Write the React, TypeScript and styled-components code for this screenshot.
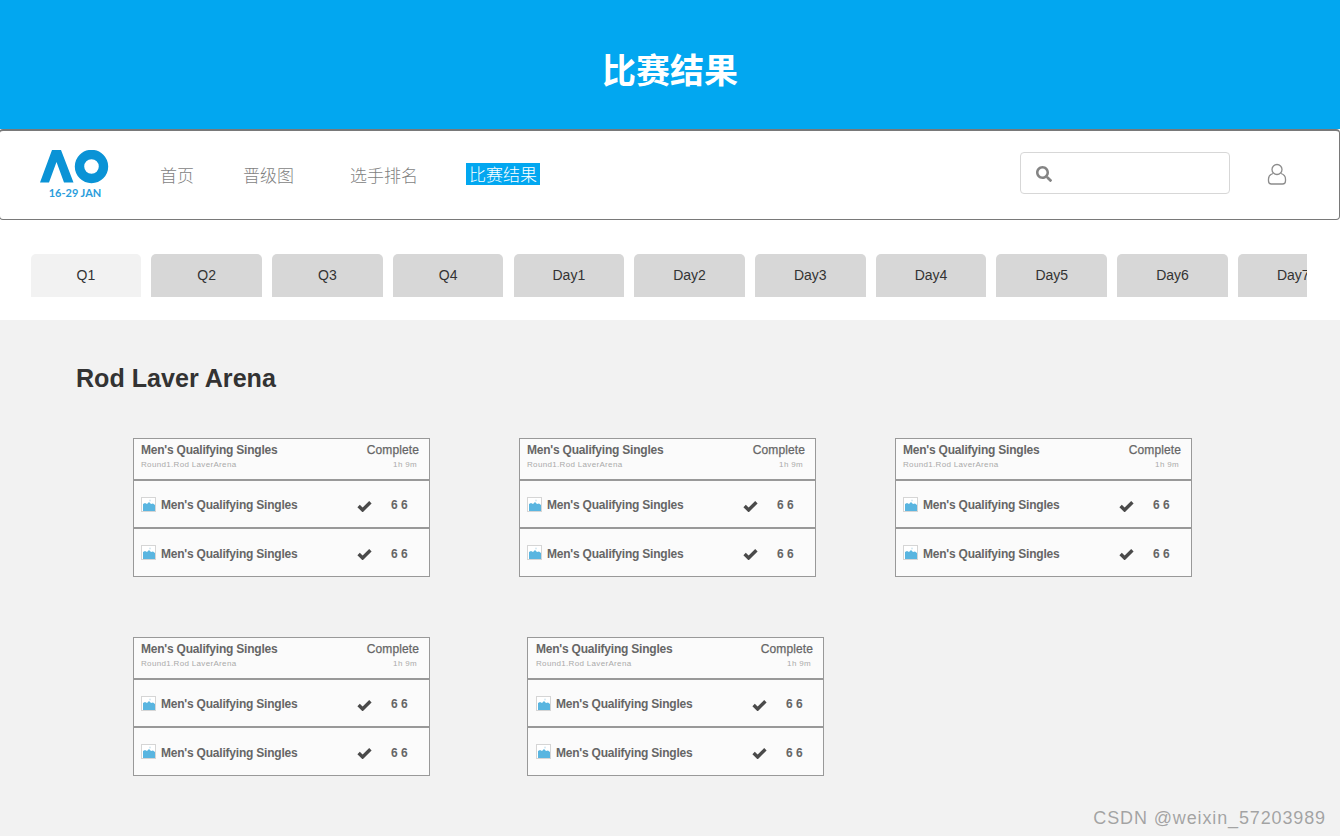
import styled, { createGlobalStyle } from 'styled-components'
import { FaSearch } from 'react-icons/fa'

const GlobalStyle = createGlobalStyle`
  html, body {
    margin: 0;
    padding: 0;
    background: #fff;
    overflow: hidden;
  }
  body {
    font-family: "Liberation Sans", "Noto Sans CJK SC", sans-serif;
  }
`

const Page = styled.div`
  position: relative;
  width: 1340px;
  height: 836px;
  overflow: hidden;
`

const Banner = styled.header`
  display: flex;
  align-items: center;
  justify-content: center;
  box-sizing: border-box;
  height: 129px;
  padding-top: 8px;
  background: #02a7f0;
  color: #fff;
  font-size: 34px;
  font-weight: 700;
  font-family: "Noto Sans CJK SC", sans-serif;
`

const NavBar = styled.nav`
  display: flex;
  align-items: center;
  box-sizing: border-box;
  width: 1341px;
  height: 91px;
  margin-left: -1px;
  padding: 0 52px 0 40px;
  border: 1px solid #797979;
  border-top-width: 2px;
  border-radius: 4px;
  background: #fff;
`

const Links = styled.div`
  display: flex;
  align-items: center;
  margin-left: 50px;
  flex: 1;
`

const NavLink = styled.a<{ $left?: number; $active?: boolean }>`
  margin-left: ${({ $left }) => $left ?? 0}px;
  padding: ${({ $active }) => ($active ? '0 3px' : '0')};
  height: 22px;
  line-height: 22px;
  margin-top: ${({ $active }) => ($active ? '-2px' : '0')};
  font-family: "Noto Sans CJK SC", sans-serif;
  font-size: 17px;
  font-weight: 300;
  color: ${({ $active }) => ($active ? '#fff' : '#7f7f7f')};
  background: ${({ $active }) => ($active ? '#02a7f0' : 'transparent')};
`

const SearchBox = styled.div`
  display: flex;
  align-items: center;
  box-sizing: border-box;
  width: 210px;
  height: 42px;
  padding-left: 15px;
  margin-top: -5px;
  border: 1px solid #d7d7d7;
  border-radius: 4px;
  color: #848484;
`

const SearchIcon = styled(FaSearch)`
  margin-top: 2px;
`

const UserIcon = styled.svg`
  display: block;
  margin-left: 37px;
  margin-top: -3px;
`

const TabStrip = styled.div`
  display: flex;
  gap: 10.15px;
  width: 1276.4px;
  height: 43px;
  margin: 34px 0 23px 30.6px;
  overflow: hidden;
`

const Tab = styled.div<{ $active?: boolean }>`
  flex: 0 0 110.6px;
  display: flex;
  align-items: center;
  justify-content: center;
  box-sizing: border-box;
  padding-bottom: 2px;
  border-radius: 5px 5px 0 0;
  background: ${({ $active }) => ($active ? '#f2f2f2' : '#d7d7d7')};
  color: #333;
  font-size: 14px;
`

const Results = styled.main`
  box-sizing: border-box;
  height: 516px;
  padding: 44px 0 0 76px;
  background: #f2f2f2;
`

const ArenaTitle = styled.h2`
  margin: 0 0 46px;
  height: 28px;
  line-height: 28px;
  font-size: 25.1px;
  font-weight: 700;
  color: #333;
`

const CardRow = styled.div`
  display: flex;
  margin: 0 0 60px 57px;
`

const Card = styled.article<{ $left?: number }>`
  box-sizing: border-box;
  width: 297px;
  height: 139px;
  margin-left: ${({ $left }) => $left ?? 0}px;
  border: 1px solid #999;
  background: #fbfbfb;
  color: #666;
`

const CardHead = styled.div<{ $inset: number }>`
  display: flex;
  justify-content: space-between;
  box-sizing: border-box;
  height: 42px;
  padding: 4px 10px 0 ${({ $inset }) => $inset}px;
  border-bottom: 2px solid #999;
`

const HeadSide = styled.div<{ $right?: boolean }>`
  text-align: ${({ $right }) => ($right ? 'right' : 'left')};
`

const HeadTitle = styled.div<{ $bold?: boolean }>`
  height: 15px;
  line-height: 15px;
  font-size: 12px;
  font-weight: ${({ $bold }) => ($bold ? 700 : 400)};
  letter-spacing: ${({ $bold }) => ($bold ? '-0.21px' : '0.1px')};
  -webkit-text-stroke: ${({ $bold }) => ($bold ? '0' : '0.25px')};
`

const HeadNote = styled.div<{ $right?: boolean }>`
  margin-top: 1px;
  padding-right: ${({ $right }) => ($right ? '2px' : '0')};
  height: 11px;
  line-height: 11px;
  font-size: 8px;
  letter-spacing: 0.33px;
  color: #aaa;
`

const PlayerRow = styled.div<{ $last?: boolean; $inset: number }>`
  display: flex;
  align-items: center;
  box-sizing: border-box;
  height: ${({ $last }) => ($last ? '47px' : '48px')};
  padding-left: ${({ $inset }) => $inset}px;
  border-bottom: ${({ $last }) => ($last ? 'none' : '2px solid #999')};
`

const PlayerName = styled.span`
  flex: 0 0 196px;
  margin-left: 5px;
  padding-top: 2px;
  font-size: 12px;
  font-weight: 700;
  letter-spacing: -0.21px;
`

const Mark = styled.svg`
  display: block;
  flex: none;
  margin-top: 3px;
`

const Score = styled.span`
  margin-left: 19px;
  padding-top: 2px;
  font-size: 12px;
  font-weight: 700;
`

const Watermark = styled.div`
  position: absolute;
  right: 14px;
  bottom: 7px;
  font-size: 18px;
  letter-spacing: 0.87px;
  color: rgba(110, 110, 110, 0.6);
`

const tabs = ['Q1', 'Q2', 'Q3', 'Q4', 'Day1', 'Day2', 'Day3', 'Day4', 'Day5', 'Day6', 'Day7']

const Logo = () => (
  <svg width="70" height="50" viewBox="0 0 70 50">
    <path d="M0 32.5 L12 0 H21 L33.5 32.5 H24 L16.5 12 L9 32.5 Z" fill="#0a93d6" />
    <circle cx="51.5" cy="16.5" r="12" fill="none" stroke="#0a93d6" strokeWidth="9.4" />
    <text x="35" y="46.5" textAnchor="middle" fontFamily="Lato, sans-serif" fontWeight="700" fontSize="11" fill="#2a9ddc">
      16-29 JAN
    </text>
  </svg>
)

const ImageIcon = () => (
  <svg width="15" height="15" viewBox="0 0 15 15">
    <rect x="0.5" y="0.5" width="14" height="14" fill="#fff" stroke="#d5d5d5" />
    <path d="M2 14 V7 L4 6 L6 7 L8 5 L10 7 L12 6.5 L14 8 V14 Z" fill="#59b5e0" />
    <circle cx="9" cy="3.5" r="1" fill="#d5e8f2" />
  </svg>
)

const Player = ({ last, inset }: { last?: boolean; inset: number }) => (
  <PlayerRow $last={last} $inset={inset}>
    <ImageIcon />
    <PlayerName>Men's Qualifying Singles</PlayerName>
    <Mark width="15" height="12" viewBox="0 0 15 12">
      <path d="M1.6 6 L5.6 10 L13.4 2.2" fill="none" stroke="#4a4a4a" strokeWidth="3.4" />
    </Mark>
    <Score>6 6</Score>
  </PlayerRow>
)

const MatchCard = ({ left, inset = 7 }: { left?: number; inset?: number }) => (
  <Card $left={left}>
    <CardHead $inset={inset}>
      <HeadSide>
        <HeadTitle $bold>Men's Qualifying Singles</HeadTitle>
        <HeadNote>Round1.Rod LaverArena</HeadNote>
      </HeadSide>
      <HeadSide $right>
        <HeadTitle>Complete</HeadTitle>
        <HeadNote $right>1h 9m</HeadNote>
      </HeadSide>
    </CardHead>
    <Player inset={inset} />
    <Player inset={inset} last />
  </Card>
)

export default function App() {
  return (
    <Page>
      <GlobalStyle />
      <Banner>比赛结果</Banner>
      <NavBar>
        <Logo />
        <Links>
          <NavLink>首页</NavLink>
          <NavLink $left={49}>晋级图</NavLink>
          <NavLink $left={56}>选手排名</NavLink>
          <NavLink $left={48} $active>比赛结果</NavLink>
        </Links>
        <SearchBox><SearchIcon size={16} /></SearchBox>
        <UserIcon width="20" height="22" viewBox="0 0 20 22" fill="none" stroke="#8c8c8c" strokeWidth="1.3">
          <circle cx="10" cy="6.5" r="5" />
          <path d="M6 10.5 C3 11.5 1.5 13.5 1.5 16 V18 C1.5 20 2.5 21 4.5 21 H15.5 C17.5 21 18.5 20 18.5 18 V16 C18.5 13.5 17 11.5 14 10.5" />
        </UserIcon>
      </NavBar>
      <TabStrip>
        {tabs.map((t, i) => (
          <Tab key={t} $active={i === 0}>{t}</Tab>
        ))}
      </TabStrip>
      <Results>
        <ArenaTitle>Rod Laver Arena</ArenaTitle>
        <CardRow>
          <MatchCard />
          <MatchCard left={89} />
          <MatchCard left={79} />
        </CardRow>
        <CardRow>
          <MatchCard />
          <MatchCard left={97} inset={8} />
        </CardRow>
      </Results>
      <Watermark>CSDN @weixin_57203989</Watermark>
    </Page>
  )
}
